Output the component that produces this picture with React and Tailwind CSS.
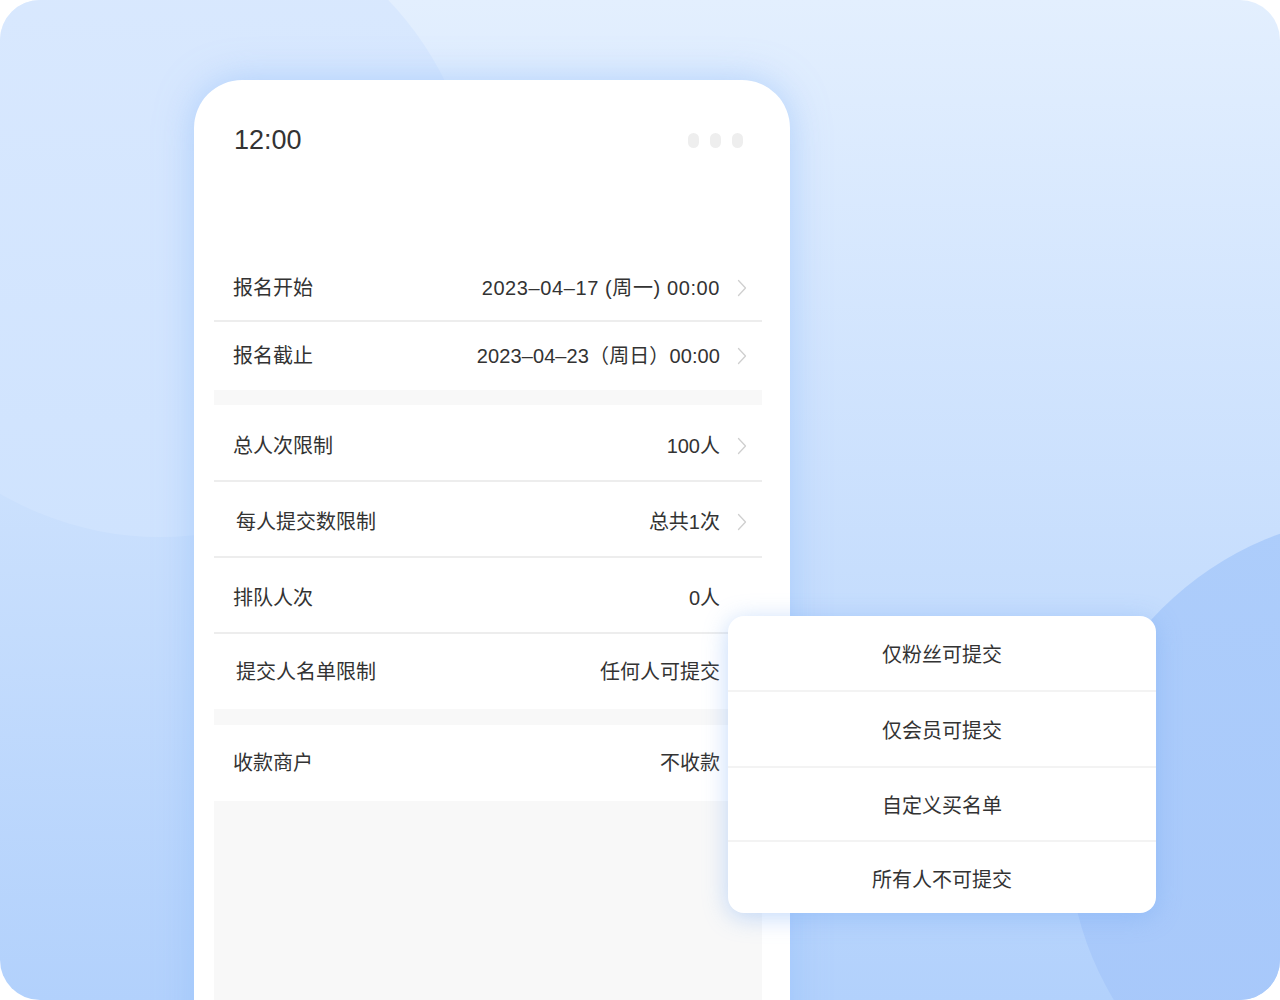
import React from 'react'

const rows = [
  { label: '报名开始', value: '2023–04–17 (周一) 00:00', arrow: true, h: 'h-[70px] pt-[3px]', border: true, track: 'tracking-[0.6px]' },
  { label: '报名截止', value: '2023–04–23（周日）00:00', arrow: true, h: 'h-[68px]', border: false, track: 'tracking-[0.1px]' },
  { gap: 'h-[15px]' },
  { label: '总人次限制', value: '100人', arrow: true, h: 'h-[77px] pt-[6px]', border: true },
  { label: '每人提交数限制', value: '总共1次', arrow: true, h: 'h-[76px] pt-[6px]', border: true, lp: 'pl-[22px]' },
  { label: '排队人次', value: '0人', arrow: false, h: 'h-[76px] pt-[6px]', border: true },
  { label: '提交人名单限制', value: '任何人可提交', arrow: false, h: 'h-[75px]', border: false, lp: 'pl-[22px]' },
  { gap: 'h-[16px]' },
  { label: '收款商户', value: '不收款', arrow: false, h: 'h-[76px]', border: false },
]

const options = [
  { text: '仅粉丝可提交', h: 'h-[76px]' },
  { text: '仅会员可提交', h: 'h-[76px]' },
  { text: '自定义买名单', h: 'h-[74px]' },
  { text: '所有人不可提交', h: 'h-[71px]' },
]

const Chevron = () => (
  <svg width="10" height="18" viewBox="0 0 10 18" fill="none">
    <path d="M1.5 1.5 L8.5 9 L1.5 16.5" stroke="#cfcfcf" strokeWidth="1.3" strokeLinecap="round" strokeLinejoin="round" />
  </svg>
)

const SettingRow = ({ row }) => {
  if (row.gap) return <div className={`${row.gap} bg-[#f8f8f8]`} />
  return (
    <div className={`${row.h} flex items-center ${row.lp || 'pl-[19px]'} ${row.border ? 'border-b-2 border-[#ededed]' : ''}`}>
      <span className="flex-1 text-[20px] text-[#333]">{row.label}</span>
      <span className={`text-[20px] text-[#333] ${row.track || ''}`}>{row.value}</span>
      <div className="w-[42px] flex pl-[17px]">
        {row.arrow && <Chevron />}
      </div>
    </div>
  )
}

export default function App() {
  return (
    <div className="w-[1280px] h-[1000px] bg-white" style={{ fontFamily: '"Liberation Sans", "Noto Sans CJK SC", sans-serif' }}>
      <div className="relative w-full h-full rounded-[40px] overflow-hidden bg-linear-to-b from-[#e3effe] to-[#b2d1fc]">
        {/* decorative circles */}
        <div className="absolute left-[-157px] top-[-97px] w-[634px] h-[634px] rounded-full bg-linear-to-b from-[#dae9fe] to-[#cfe3fe]" />
        <div className="absolute left-[1068px] top-[515px] w-[640px] h-[640px] rounded-full bg-linear-to-b from-[#adcdfb] to-[#a6c7fa]" />

        {/* phone */}
        <div className="relative pl-[194px] pt-[80px]">
          <div className="w-[596px] h-[980px] bg-white rounded-t-[48px] shadow-[0_0_36px_rgba(140,185,250,0.55)] flex flex-col">
            <div className="flex items-center justify-between pl-[40px] pr-[47px] pt-[44px] h-[76px]">
              <span className="text-[27px] font-medium text-[#333] leading-[32px]">12:00</span>
              <div className="flex gap-[11px]">
                <span className="w-[11px] h-[15px] rounded-full bg-[#eeeeee]" />
                <span className="w-[11px] h-[15px] rounded-full bg-[#eeeeee]" />
                <span className="w-[11px] h-[15px] rounded-full bg-[#eeeeee]" />
              </div>
            </div>
            <div className="h-[96px]" />
            <div className="ml-[20px] w-[548px] flex-1 flex flex-col">
              {rows.map((row, i) => (
                <SettingRow key={i} row={row} />
              ))}
              <div className="flex-1 bg-[#f8f8f8]" />
            </div>
          </div>
        </div>

        {/* dropdown */}
        <div className="absolute left-[728px] top-[616px] w-[428px] bg-white rounded-[16px] shadow-[0_4px_24px_rgba(120,170,245,0.45)] overflow-hidden">
          {options.map((opt, i) => (
            <div
              key={opt.text}
              className={`${opt.h} pt-[4px] flex items-center justify-center text-[20px] text-[#333] ${i < options.length - 1 ? 'border-b-2 border-[#f3f3f3]' : ''}`}
            >
              {opt.text}
            </div>
          ))}
        </div>
      </div>
    </div>
  )
}
